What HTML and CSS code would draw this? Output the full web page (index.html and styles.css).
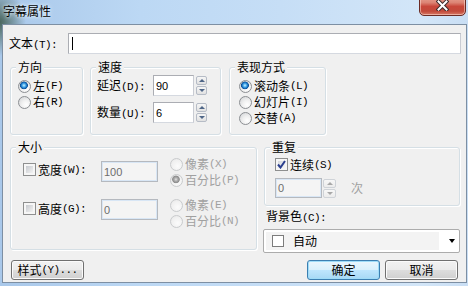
FILE: index.html
```html
<!DOCTYPE html>
<html lang="zh-CN">
<head>
<meta charset="utf-8">
<title>字幕属性</title>
<link rel="stylesheet" href="styles.css">
</head>
<body>
<div class="window">
  <div class="titlebar">
    <span class="title">字幕属性</span>
    <div class="close">
      <svg class="close-x" width="13" height="11" viewBox="0 0 13 11"><path d="M2.5 1.5 L10.5 9.5 M10.5 1.5 L2.5 9.5" stroke="#3a2a2a" stroke-width="4" stroke-linecap="square" fill="none"/><path d="M2.5 1.5 L10.5 9.5 M10.5 1.5 L2.5 9.5" stroke="#fff" stroke-width="2" stroke-linecap="square" fill="none"/></svg>
    </div>
  </div>
  <div class="client">
    <div class="text-row">
      <span class="text-lbl">文本<span class="k">(T):</span></span>
      <div class="edit text-edit"><span class="caret"></span></div>
    </div>

    <div class="groups-row">
      <div class="group g-dir">
        <span class="gtitle">方向</span>
        <div class="opts">
          <div class="opt"><span class="radio checked"></span>左<span class="k">(F)</span></div>
          <div class="opt"><span class="radio"></span>右<span class="k">(R)</span></div>
        </div>
      </div>
      <div class="group g-speed">
        <span class="gtitle">速度</span>
        <div class="speed-row first">
          <span class="speed-lbl">延迟<span class="k">(D):</span></span>
          <div class="edit num">90</div>
          <div class="spin"><span class="sb up"></span><span class="sb down"></span></div>
        </div>
        <div class="speed-row">
          <span class="speed-lbl">数量<span class="k">(U):</span></span>
          <div class="edit num">6</div>
          <div class="spin"><span class="sb up"></span><span class="sb down"></span></div>
        </div>
      </div>
      <div class="group g-mode">
        <span class="gtitle">表现方式</span>
        <div class="opts opts-mode">
          <div class="opt"><span class="radio checked"></span>滚动条<span class="k">(L)</span></div>
          <div class="opt"><span class="radio"></span>幻灯片<span class="k">(I)</span></div>
          <div class="opt"><span class="radio"></span>交替<span class="k">(A)</span></div>
        </div>
      </div>
    </div>

    <div class="mid-row">
      <div class="group g-size">
        <span class="gtitle">大小</span>
        <div class="size-row first">
          <div class="chk-lbl"><span class="cb"></span>宽度<span class="k">(W):</span></div>
          <div class="edit dis size-edit">100</div>
          <div class="unit-col">
            <div class="opt dim"><span class="radio dis"></span>像素<span class="k">(X)</span></div>
            <div class="opt dim"><span class="radio dis checked"></span>百分比<span class="k">(P)</span></div>
          </div>
        </div>
        <div class="size-row second">
          <div class="chk-lbl"><span class="cb"></span>高度<span class="k">(G):</span></div>
          <div class="edit dis size-edit">0</div>
          <div class="unit-col">
            <div class="opt dim"><span class="radio dis"></span>像素<span class="k">(E)</span></div>
            <div class="opt dim"><span class="radio dis"></span>百分比<span class="k">(N)</span></div>
          </div>
        </div>
      </div>

      <div class="right-col">
        <div class="group g-repeat">
          <span class="gtitle">重复</span>
          <div class="chk-lbl repeat-chk"><span class="cb checked"><svg class="tick" width="9" height="9" viewBox="0 0 9 9"><path d="M1 4.5 L3.5 7.5 L8 1" stroke="#2b3f8f" stroke-width="2" fill="none"/></svg></span>连续<span class="k">(S)</span></div>
          <div class="repeat-row">
            <div class="edit dis repeat-edit">0</div>
            <div class="spin dis-spin"><span class="sb up"></span><span class="sb down"></span></div>
            <span class="times">次</span>
          </div>
        </div>
        <span class="bg-lbl">背景色<span class="k">(C):</span></span>
        <div class="combo">
          <div class="combo-item"><span class="swatch"></span><span class="combo-text">自动</span></div>
          <div class="combo-arrow"><span class="tri"></span></div>
        </div>
      </div>
    </div>

    <div class="btn-row">
      <div class="btn">样式<span class="k">(Y)...</span></div>
      <div class="btn default">确定</div>
      <div class="btn">取消</div>
    </div>
  </div>
</div>
</body>
</html>
```
FILE: styles.css
```css
* { box-sizing: border-box; }
html, body { margin: 0; padding: 0; }
body {
  width: 468px;
  height: 286px;
  overflow: hidden;
  font: 12px/14px "Noto Sans CJK SC", "Noto Sans", sans-serif;
  color: #000;
  background: #c3dbf2;
}
.k {
  font: 11px "Liberation Mono", monospace;
  letter-spacing: -0.6px;
}

.window {
  width: 468px;
  height: 286px;
  display: flex;
  flex-direction: column;
  padding: 0 1px 0 2px;
  background:
    radial-gradient(ellipse 26px 34px at 0 22px, rgba(58, 86, 70, 0.85), rgba(58, 86, 70, 0) 100%),
    linear-gradient(to right, #a9c8ea 0%, #bcd8f4 30%, #c6def6 60%, #d3e6f8 90%, #c9def4 100%);
}

.titlebar {
  height: 24px;
  flex: none;
  display: flex;
  justify-content: space-between;
  align-items: flex-start;
}
.title {
  margin: 3px 0 0 1px;
  line-height: 16px;
  text-shadow: 0 0 5px #e8f4ff, 0 0 3px #e8f4ff;
}
.close {
  width: 47px;
  height: 21px;
  margin: -5px 1px 0 0;
  border: 1px solid #6b2b24;
  border-radius: 0 0 5px 5px;
  background: linear-gradient(#e9a898 0%, #dc8474 35%, #c8473a 55%, #c24a3b 80%, #d77a66 100%);
  box-shadow: inset 0 0 0 1px rgba(255, 220, 210, 0.55);
  display: flex;
  justify-content: center;
  align-items: center;
}
.close-x { margin-bottom: 1px; }

.client {
  height: 259px;
  flex: none;
  border: 1px solid #7d8fa3;
  background: #f0f0f0;
  display: flex;
  flex-direction: column;
}

/* text row */
.text-row {
  display: flex;
  align-items: center;
  margin-top: 8px;
  padding-left: 6px;
  height: 21px;
}
.text-lbl { width: 59px; }
.edit {
  border: 1px solid;
  border-color: #abadb3 #c9ccd3 #d5d9e0 #abadb3;
  background: #fff;
  height: 21px;
  display: flex;
  align-items: center;
  padding-left: 2px;
  font: 11px "Liberation Sans", sans-serif;
}
.text-edit { width: 393px; padding-left: 3px; }
.caret { width: 1px; height: 13px; background: #000; }

/* groups */
.group {
  border: 1px solid #d5dfe5;
  border-radius: 3px;
  box-shadow: inset 1px 1px 0 #fff, 1px 1px 0 #fff;
  display: flex;
  flex-direction: column;
  align-items: flex-start;
}
.gtitle {
  margin: -8px 0 0 5px;
  padding: 0 2px;
  background: #f0f0f0;
  line-height: 14px;
}

.groups-row {
  display: flex;
  margin-top: 13px;
  padding-left: 7px;
}
.g-dir { width: 73px; height: 68px; }
.g-speed { width: 131px; height: 68px; margin-left: 7px; }
.g-mode { width: 97px; height: 68px; margin-left: 8px; }

.opts {
  padding: 4px 0 0 7px;
  display: flex;
  flex-direction: column;
}
.opts-mode { padding-left: 9px; }
.opt {
  height: 16px;
  display: flex;
  align-items: center;
  white-space: nowrap;
}
.opt.dim { color: #a0a0a0; }

.radio {
  width: 13px;
  height: 13px;
  flex: none;
  margin-right: 2px;
  border-radius: 50%;
  border: 1px solid #8c8f93;
  background: radial-gradient(circle at 65% 70%, #ffffff 0%, #f1f1f1 40%, #cfd1d4 100%);
}
.radio.checked {
  background:
    radial-gradient(circle at 45% 40%, #d4efff 0px, #6cc2f3 1.2px, #1f7fcf 2.6px, #0d4f93 3.6px, rgba(13, 79, 147, 0) 4.2px),
    radial-gradient(circle at 65% 70%, #ffffff 0%, #f1f1f1 40%, #cfd1d4 100%);
}
.radio.dis {
  border-color: #c9cbcd;
  background: radial-gradient(circle at 60% 65%, #fbfbfb 0%, #f0f0f0 60%, #e3e3e3 100%);
}
.radio.dis.checked {
  background:
    radial-gradient(circle at 45% 40%, #e6e6e6 0px, #b0b0b0 1.6px, #8c8c8c 3.4px, rgba(140, 140, 140, 0) 4.2px),
    radial-gradient(circle at 60% 65%, #fbfbfb 0%, #f0f0f0 60%, #e3e3e3 100%);
}

/* speed */
.speed-row {
  display: flex;
  align-items: center;
  padding-left: 6px;
  height: 21px;
  margin-top: 6px;
}
.speed-row.first { margin-top: 1px; }
.speed-lbl { width: 56px; }
.num { width: 41px; }
.spin {
  width: 11px;
  height: 19px;
  margin-left: 2px;
  display: flex;
  flex-direction: column;
  justify-content: space-between;
}
.sb {
  height: 9px;
  border: 1px solid #b6bcc6;
  border-radius: 2px;
  background: linear-gradient(#f6f6f6, #e1e1e1);
  display: flex;
  align-items: center;
  justify-content: center;
}
.sb.up::after {
  content: "";
  border-left: 3px solid transparent;
  border-right: 3px solid transparent;
  border-bottom: 3px solid #4f6687;
}
.sb.down::after {
  content: "";
  border-left: 3px solid transparent;
  border-right: 3px solid transparent;
  border-top: 3px solid #4f6687;
}

/* middle */
.mid-row {
  display: flex;
  margin-top: 12px;
  padding-left: 7px;
}
.g-size {
  width: 247px;
  height: 103px;
  padding-left: 12px;
}
.g-size .gtitle { margin-left: -7px; }
.size-row {
  display: flex;
  align-items: flex-start;
  height: 32px;
}
.size-row.first { margin-top: 2px; }
.size-row.second { margin-top: 9px; }
.chk-lbl {
  display: flex;
  align-items: center;
  height: 13px;
  white-space: nowrap;
}
.size-row .chk-lbl { width: 78px; }
.size-row.first .chk-lbl { margin-top: 7px; }
.size-row.second .chk-lbl { margin-top: 5px; }
.cb {
  width: 13px;
  height: 13px;
  flex: none;
  margin-right: 2px;
  border: 1px solid #8e8f8f;
  padding: 2px;
  background: linear-gradient(135deg, #c6c9ce, #f3f3f3) content-box, #f6f6f6;
  display: grid;
}
.cb.checked { background: linear-gradient(135deg, #d6d9de, #f6f6f6) content-box, #f6f6f6; }
.tick { margin: -1px; }
.edit.dis {
  background: #f4f4f4;
  border-color: #b5b9bf;
  box-shadow: inset 0 0 0 1px #d8e6f5;
  color: #6d6d6d;
}
.size-edit { width: 57px; }
.size-row.first .size-edit { margin-top: 5px; }
.size-row.second .size-edit { margin-top: 2px; }
.unit-col {
  margin-left: 12px;
  display: flex;
  flex-direction: column;
}

.right-col {
  width: 197px;
  margin-left: 6px;
  display: flex;
  flex-direction: column;
}
.g-repeat {
  width: 196px;
  height: 59px;
  margin-left: 1px;
  padding-left: 10px;
}
.g-repeat .gtitle { margin-left: -5px; }
.repeat-chk { margin-top: 4px; }
.repeat-row {
  display: flex;
  align-items: center;
  margin-top: 7px;
  height: 20px;
}
.repeat-edit { width: 47px; height: 20px; }
.dis-spin { width: 13px; margin-left: 1px; }
.dis-spin .sb { border-color: #cfd3d8; background: linear-gradient(#f7f7f7, #ececec); }
.dis-spin .sb.up::after { border-bottom-color: #a8a8a8; }
.dis-spin .sb.down::after { border-top-color: #a8a8a8; }
.times { margin-left: 15px; color: #a0a0a0; }

.bg-lbl {
  margin-top: 3px;
  padding-left: 3px;
  line-height: 14px;
}
.combo {
  margin-top: 5px;
  height: 24px;
  border: 1px solid #acacac;
  border-radius: 2px;
  background: #fff;
  padding: 2px;
  display: flex;
}
.combo-item {
  flex: 1;
  background: #f3f3f3;
  display: flex;
  align-items: center;
  padding-left: 6px;
}
.swatch {
  width: 12px;
  height: 12px;
  border: 1px solid #7c7c7c;
  background: #fff;
}
.combo-text { margin-left: 9px; }
.combo-arrow {
  width: 18px;
  display: flex;
  align-items: center;
  padding-left: 10px;
}
.tri {
  border-left: 3.5px solid transparent;
  border-right: 3.5px solid transparent;
  border-top: 4px solid #000;
}

/* buttons */
.btn-row {
  display: flex;
  margin-top: 7px;
  padding: 0 8px;
}
.btn {
  width: 73px;
  height: 20px;
  border: 1px solid #707070;
  border-radius: 3px;
  background: linear-gradient(#f2f2f2 0%, #ebebeb 48%, #dddddd 52%, #cfcfcf 100%);
  box-shadow: inset 0 0 0 1px #fbfbfb;
  display: flex;
  align-items: center;
  justify-content: center;
  white-space: nowrap;
}
.btn.default {
  margin-left: auto;
  border-color: #3c7fb1;
  background: linear-gradient(#eaf6fd 0%, #d9f0fc 48%, #bee6fd 52%, #a7d9f5 100%);
  box-shadow: inset 0 0 0 1px #9fdcf8;
}
.btn.default + .btn { margin-left: 5px; }
```
